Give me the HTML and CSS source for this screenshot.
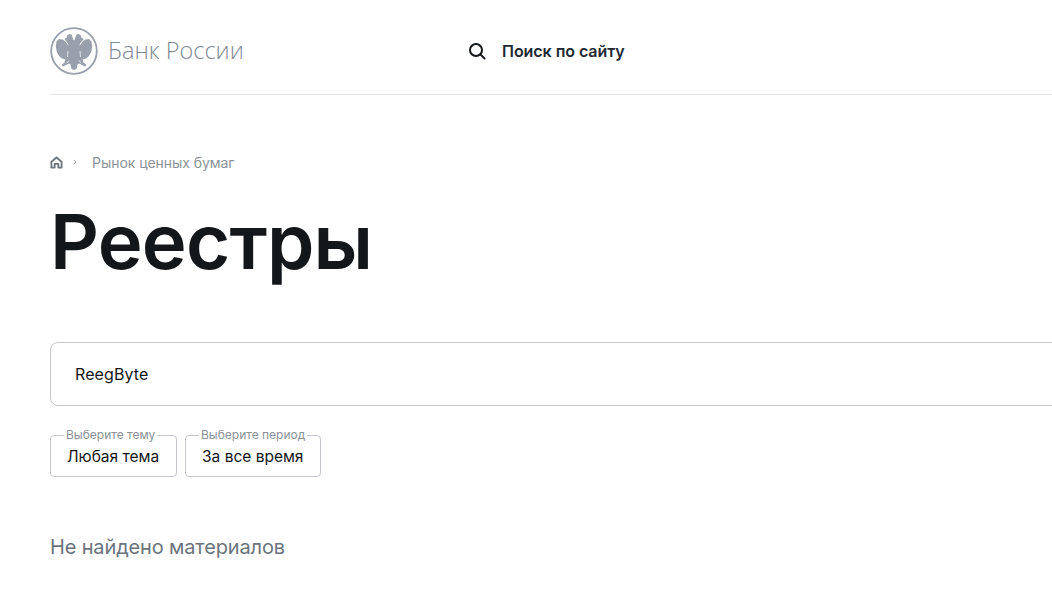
FILE: index.html
```html
<!DOCTYPE html>
<html lang="ru">
<head>
<meta charset="utf-8">
<title>Реестры</title>
<link rel="stylesheet" href="styles.css">
</head>
<body>
<div class="page">
  <header class="header">
    <a class="brand">
      <svg class="emblem" viewBox="0 0 48 48" aria-hidden="true">
        <circle class="ring" cx="24" cy="24" r="22.8"/>
        <g class="eagle">
          <path id="half" d="M24 43 L21.500 42 L20.500 37.500 L19 36.500 L16 38 L13 39.500 L11.500 38 L14.500 35.500 L15.500 32.500 L12 31.500 L9 29 L6.800 25 L5.800 19.500 L6.500 14.500 L9 12 L12.500 12.500 L15.500 14.500 L17 17 L18.500 18.500 L18 16.500 L16.500 14.500 L15 13 L14.500 11.500 L16.500 11 L17 8.500 L19.500 7 L21.500 7.500 L22.500 10 L23.200 12.500 L24 13.500 Z"/>
          <use href="#half" transform="matrix(-1 0 0 1 48 0)"/>
        </g>
        <path class="feather" d="M18 24 L17.500 30 M30 24 L30.500 30 M17 36 L19 33.500 M31 36 L29 33.500"/>
      </svg>
      <span class="brand-name">Банк России</span>
    </a>
    <a class="site-search">
      <svg class="search-icon" viewBox="0 0 18 18" aria-hidden="true">
        <circle cx="8" cy="8" r="6"/>
        <path d="M12.400 12.400 16.500 16.500"/>
      </svg>
      <span>Поиск по сайту</span>
    </a>
  </header>

  <nav class="crumbs">
    <svg class="home-icon" viewBox="0 0 14 14" aria-hidden="true">
      <path d="M1.500 6.200 7 1.600l5.500 4.600V12.500H9V8.500H5v4H1.500z"/>
    </svg>
    <svg class="crumb-sep" viewBox="0 0 4 6" aria-hidden="true"><path d="M1 1l2 2-2 2"/></svg>
    <span class="crumb-text">Рынок ценных бумаг</span>
  </nav>

  <h1 class="title">Реестры</h1>

  <div class="query"><span>ReegByte</span></div>

  <div class="filters">
    <fieldset class="filter filter-theme">
      <legend>Выберите тему</legend>
      <span>Любая тема</span>
    </fieldset>
    <fieldset class="filter filter-period">
      <legend>Выберите период</legend>
      <span>За все время</span>
    </fieldset>
  </div>

  <p class="empty">Не найдено материалов</p>
</div>
</body>
</html>
```

FILE: styles.css
```css
html, body {
  margin: 0;
  padding: 0;
  background: #fff;
  overflow: hidden;
  height: 600px;
}

.page {
  width: 1100px;
  margin-left: 50px;
  font-family: Inter, "Noto Sans", sans-serif;
  color: #14171a;
}

.header {
  display: flex;
  align-items: center;
  height: 94px;
  border-bottom: 1px solid #e6e8ea;
}

.brand {
  display: flex;
  align-items: center;
  gap: 10px;
  width: 418px;
  margin-top: 7px;
}

.emblem {
  width: 48px;
  height: 48px;
  flex: none;
}

.ring {
  fill: none;
  stroke: #99a0ab;
  stroke-width: 1.8;
}

.eagle {
  fill: #99a0ab;
}

.feather {
  fill: none;
  stroke: #fff;
  stroke-width: .7;
}

.brand-name {
  padding-bottom: 2px;
  font-family: "Open Sans", "Noto Sans", sans-serif;
  font-weight: 300;
  font-size: 23.500px;
  color: #828a95;
}

.site-search {
  display: flex;
  align-items: center;
  gap: 16px;
  font-size: 16px;
  font-weight: 600;
  letter-spacing: -.05px;
  color: #1f2933;
  margin-top: 7px;
}

.search-icon {
  width: 18px;
  height: 18px;
  fill: none;
  stroke: #14171a;
  stroke-width: 2;
  stroke-linecap: round;
}

.crumbs {
  display: flex;
  align-items: center;
  margin-top: 58px;
  height: 18px;
  font-size: 14px;
  letter-spacing: -.05px;
  color: #8b929a;
}

.home-icon {
  width: 13px;
  height: 13px;
  fill: none;
  stroke: #6f7680;
  stroke-width: 2;
  stroke-linejoin: round;
}

.crumb-sep {
  width: 4px;
  height: 6px;
  margin-left: 10px;
  margin-right: 15px;
  fill: none;
  stroke: #9aa0a8;
  stroke-width: 1;
}

.title {
  margin: 24px 0 0;
  font-size: 76px;
  line-height: 92px;
  font-weight: 600;
  letter-spacing: -.8px;
  color: #14171a;
}

.query {
  display: flex;
  align-items: center;
  height: 62px;
  margin-top: 55px;
  padding-left: 24px;
  border: 1px solid #c4c8cd;
  border-radius: 8px;
  font-size: 16px;
  letter-spacing: .1px;
}

.filters {
  display: flex;
  gap: 8px;
  margin-top: 22px;
}

.filter {
  margin: 0;
  padding: 3px 0 0 16px;
  height: 49px;
  box-sizing: border-box;
  border: 1px solid #c4c8cd;
  border-radius: 4px;
  font-size: 15.500px;
  line-height: 24px;
  min-width: 0;
}

.filter-theme { width: 127px; }
.filter-period { width: 136px; }

.filter legend {
  padding: 0 2px;
  margin-left: -3px;
  font-size: 12px;
  line-height: 14px;
  color: #8b929a;
}

.empty {
  margin: 58px 0 0;
  font-size: 20px;
  line-height: 24px;
  letter-spacing: -.15px;
  color: #6b737d;
}
```
